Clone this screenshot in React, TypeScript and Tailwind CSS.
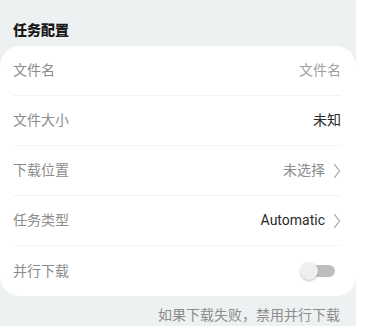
import React from "react";

const font = { fontFamily: 'Roboto, "Noto Sans CJK SC", "Noto Sans", sans-serif' };

function Chevron() {
  return (
    <svg width="8" height="16" viewBox="0 0 8 16" className="ml-[8px]">
      <path d="M1.5 1.5 L6.5 8 L1.5 14.5" fill="none" stroke="#9a9a9a" strokeWidth="1.1" strokeLinecap="round" strokeLinejoin="round" />
    </svg>
  );
}

function Row({ label, children, last }: { label: string; children: React.ReactNode; last?: boolean }) {
  return (
    <div className={`flex h-[50px] items-center justify-between ${last ? "" : "border-b border-[#f3f3f3]"}`}>
      <span className="text-[14px] text-[#8c8c8c]">{label}</span>
      <div className="flex items-center">{children}</div>
    </div>
  );
}

export default function App() {
  return (
    <div className="h-[326px] w-[369px] bg-white" style={font}>
      <div className="h-[326px] w-[356px] bg-[#eef1f2]">
        <div className="px-[13px] pt-[19px] text-[14px] font-black leading-[22px] text-[#1a1a1a]">任务配置</div>
        <div className="mt-[5px] rounded-[20px] bg-white px-[13px] pr-[15px]">
          <Row label="文件名">
            <span className="text-[14px] text-[#a0a0a0]">文件名</span>
          </Row>
          <Row label="文件大小">
            <span className="text-[14px] text-[#2a2a2a]">未知</span>
          </Row>
          <Row label="下载位置">
            <span className="text-[14px] text-[#8c8c8c]">未选择</span>
            <Chevron />
          </Row>
          <Row label="任务类型">
            <span className="text-[14px] text-[#2a2a2a]">Automatic</span>
            <Chevron />
          </Row>
          <Row label="并行下载" last>
            <div className="relative mr-[6px] h-[18px] w-[35px]">
              <div className="absolute right-0 top-[3px] h-[12px] w-[30px] rounded-full bg-[#bdbdbd]" />
              <div className="absolute left-0 top-0 h-[18px] w-[18px] rounded-full bg-[#efefef] shadow-[0_1px_2px_rgba(0,0,0,0.25)]" />
            </div>
          </Row>
        </div>
        <div className="pr-[16px] pt-[9px] text-right text-[14px] text-[#8c8c8c]">如果下载失败，禁用并行下载</div>
      </div>
    </div>
  );
}
